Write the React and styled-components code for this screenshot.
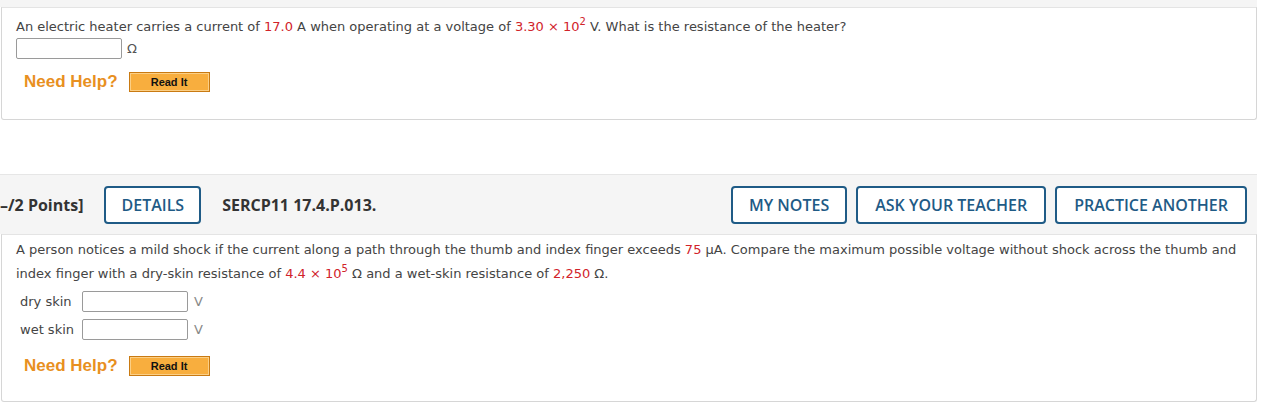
import React from 'react';
import styled, { createGlobalStyle } from 'styled-components';

const GlobalStyle = createGlobalStyle`
  html, body {
    margin: 0;
    padding: 0;
    background: #fff;
  }
  body {
    font-family: "DejaVu Sans", Verdana, sans-serif;
    color: #444;
    overflow: hidden;
  }
`;

const Page = styled.div`
  width: 1261px;
  height: 411px;
  overflow: hidden;
`;

const TopStrip = styled.div`
  height: 7px;
  width: 1257px;
  background: #f5f5f5;
`;

const Card = styled.div`
  margin-left: 1px;
  width: 1256px;
  box-sizing: border-box;
  border: 1px solid #d6d6d6;
  border-top-color: #e4e4e4;
  border-radius: 0 0 3px 3px;
  background: #fff;
  padding: ${(p) => p.$pad};
`;

const Question = styled.div`
  font-size: 13px;
  line-height: ${(p) => p.$lh || '20px'};
  color: #444;
`;

const Val = styled.span`
  color: #d1232a;
`;

const Sup = styled.sup`
  font-size: 10px;
  line-height: 0;
  vertical-align: 6px;
`;

const AnswerRow = styled.div`
  display: flex;
  align-items: center;
  height: 21px;
  margin-top: ${(p) => p.$mt || '0px'};
`;

const Label = styled.span`
  width: 66px;
  box-sizing: border-box;
  padding-left: 4px;
  font-size: 13px;
  color: #444;
`;

const Field = styled.input`
  width: 106px;
  height: 21px;
  box-sizing: border-box;
  border: 1px solid #9a9a9a;
  border-radius: 2px;
  background: #fff;
  margin: 0;
  padding: 0 3px;
`;

const Unit = styled.span`
  margin-left: ${(p) => p.$ml || '5px'};
  font-size: 13px;
  color: ${(p) => p.$color || '#555'};
`;

const HelpRow = styled.div`
  display: flex;
  align-items: center;
  gap: 11px;
  padding-left: 8px;
  height: 22px;
  margin-top: ${(p) => p.$mt};
`;

const NeedHelp = styled.span`
  font-family: "Liberation Sans", Arial, sans-serif;
  font-weight: bold;
  font-size: 17px;
  color: #e8901f;
`;

const ReadIt = styled.button`
  width: 81px;
  height: 20px;
  box-sizing: border-box;
  border: 1px solid #c97a12;
  box-shadow: inset 0 0 0 1px #fbcf86;
  background: #f8ae3e;
  font-family: "Liberation Sans", Arial, sans-serif;
  font-weight: bold;
  font-size: 11px;
  color: #111;
  padding: 0;
  cursor: pointer;
`;

const Spacer = styled.div`
  height: ${(p) => p.$h};
`;

const Header = styled.div`
  display: flex;
  align-items: center;
  width: 1257px;
  height: 60px;
  box-sizing: border-box;
  background: #f5f5f5;
  border-top: 1px solid #e6e6e6;
  padding-right: 10px;
  font-family: "Open Sans", sans-serif;
`;

const Points = styled.span`
  font-weight: bold;
  font-size: 16px;
  color: #333;
  margin-right: 21px;
`;

const Code = styled.span`
  font-weight: bold;
  font-size: 16px;
  color: #333;
  margin-left: 21px;
`;

const Buttons = styled.div`
  display: flex;
  gap: 9px;
  margin-left: auto;
`;

const OutlineButton = styled.button`
  height: 38px;
  box-sizing: border-box;
  padding: 0 ${(p) => p.$px || '16px'};
  border: 2px solid #1f5b86;
  border-radius: 4px;
  background: #fff;
  color: #1f5b86;
  font-family: "Open Sans", sans-serif;
  font-weight: 600;
  font-size: 16px;
  cursor: pointer;
`;

export default function App() {
  return (
    <Page>
      <GlobalStyle />
      <TopStrip />
      <Card $pad="9px 14px 26px 14px">
        <Question>
          An electric heater carries a current of <Val>17.0</Val> A when operating at a voltage of{' '}
          <Val>
            3.30 × 10<Sup>2</Sup>
          </Val>{' '}
          V. What is the resistance of the heater?
        </Question>
        <AnswerRow $mt="1px">
          <Field />
          <Unit $ml="5px">Ω</Unit>
        </AnswerRow>
        <HelpRow $mt="12px">
          <NeedHelp>Need Help?</NeedHelp>
          <ReadIt>Read It</ReadIt>
        </HelpRow>
      </Card>
      <Spacer $h="54px" />
      <Header>
        <Points>–/2 Points]</Points>
        <OutlineButton $px="15px">DETAILS</OutlineButton>
        <Code>SERCP11 17.4.P.013.</Code>
        <Buttons>
          <OutlineButton>MY NOTES</OutlineButton>
          <OutlineButton $px="17px">ASK YOUR TEACHER</OutlineButton>
          <OutlineButton $px="17px">PRACTICE ANOTHER</OutlineButton>
        </Buttons>
      </Header>
      <Card $pad="3px 14px 24px 14px">
        <Question $lh="24px">
          A person notices a mild shock if the current along a path through the thumb and index finger
          exceeds <Val>75</Val> μA. Compare the maximum possible voltage without shock across the thumb
          and index finger with a dry-skin resistance of{' '}
          <Val>
            4.4 × 10<Sup>5</Sup>
          </Val>{' '}
          Ω and a wet-skin resistance of <Val>2,250</Val> Ω.
        </Question>
        <AnswerRow $mt="5px">
          <Label>dry skin</Label>
          <Field />
          <Unit $ml="6px" $color="#888">V</Unit>
        </AnswerRow>
        <AnswerRow $mt="7px">
          <Label>wet skin</Label>
          <Field />
          <Unit $ml="6px" $color="#888">V</Unit>
        </AnswerRow>
        <HelpRow $mt="15px">
          <NeedHelp>Need Help?</NeedHelp>
          <ReadIt>Read It</ReadIt>
        </HelpRow>
      </Card>
    </Page>
  );
}
